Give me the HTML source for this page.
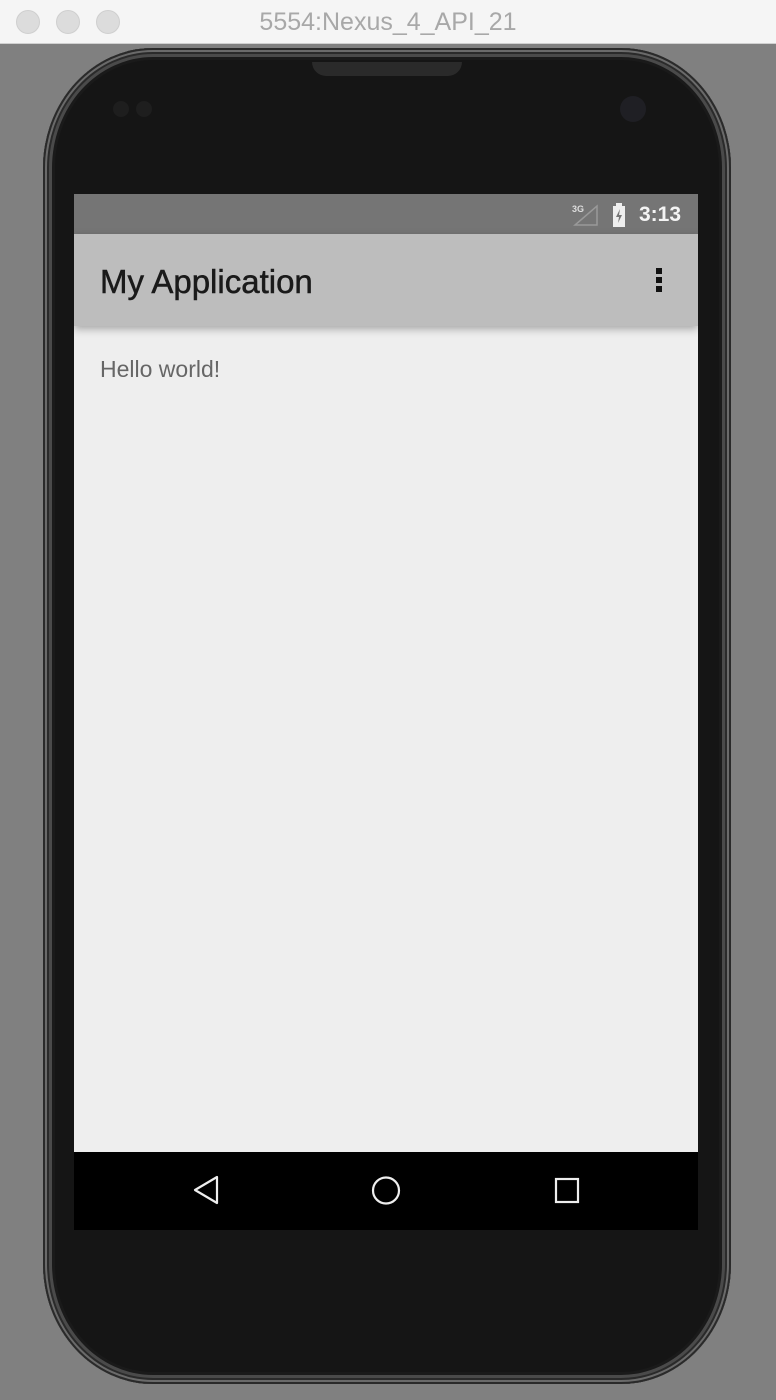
<!DOCTYPE html>
<html><head><meta charset="utf-8"><style>
body{margin:0;width:776px;height:1400px;background:#808080;overflow:hidden;position:relative;font-family:"Liberation Sans",sans-serif}
.tb{position:absolute;left:0;top:0;width:776px;height:43px;background:#f5f5f5;border-bottom:1px solid #d0d0d0}
.dot{position:absolute;top:10px;width:24px;height:24px;border-radius:50%;background:#dcdcdc;border:1px solid #cfcfcf;box-sizing:border-box}
.title{position:absolute;top:0;width:776px;text-align:center;line-height:44px;font-size:25px;color:#a8a8a8}
.phone{position:absolute;left:43px;top:48px;width:688px;height:1336px;border-radius:110px/120px;background:#151515;box-shadow:inset 0 0 0 2px #2a2a2a,inset 0 0 0 4px #6a6a6a,inset 0 0 0 6px #2a2a2a,inset 0 0 0 9px #4a4a4a,inset 0 0 0 12px #1a1a1a}
.notch{position:absolute;left:312px;top:62px;width:150px;height:14px;background:#2a2a2a;border-radius:0 0 20px 20px}
.screen{position:absolute;left:74px;top:194px;width:624px;height:1036px;background:#eeeeee;overflow:hidden}
.sb{position:absolute;left:0;top:0;width:624px;height:40px;background:#757575}
.ab{position:absolute;left:0;top:40px;width:624px;height:92px;background:#bdbdbd;box-shadow:0 3px 8px rgba(0,0,0,.3)}
.nav{position:absolute;left:0;top:958px;width:624px;height:78px;background:#000}
</style></head><body>
<div class="tb"><div class="dot" style="left:16px"></div><div class="dot" style="left:56px"></div><div class="dot" style="left:96px"></div><div class="title">5554:Nexus_4_API_21</div></div>
<div class="phone"></div>
<div class="notch"></div>
<div style="position:absolute;left:113px;top:101px;width:16px;height:16px;border-radius:50%;background:#1e1e1e"></div>
<div style="position:absolute;left:136px;top:101px;width:16px;height:16px;border-radius:50%;background:#1e1e1e"></div>
<div style="position:absolute;left:620px;top:96px;width:26px;height:26px;border-radius:50%;background:#1f1f24"></div>
<div class="screen">
<div class="sb">
<svg style="position:absolute;left:496px;top:10px" width="30" height="22"><text x="2" y="8" font-size="9" fill="#ddd" font-family="Liberation Sans" font-weight="bold">3G</text><path d="M5 21 L27 21 L27 2 Z" fill="none" stroke="#999" stroke-width="1.5"/></svg>
<svg style="position:absolute;left:538px;top:9px" width="14" height="24"><rect x="4" y="0" width="6" height="3" fill="#eee"/><rect x="1" y="3" width="12" height="21" fill="#eee"/><path d="M8 6 L4 14 L7 14 L6 20 L10 12 L7 12 Z" fill="#757575"/></svg>
<div style="position:absolute;left:565px;top:1px;line-height:40px;font-size:21px;font-weight:bold;color:#f4f4f4">3:13</div>
</div>
<div class="ab">
<div style="position:absolute;left:26px;top:2px;line-height:92px;font-size:33px;color:#1a1a1a;-webkit-text-stroke:0.5px #1a1a1a">My Application</div>
<div style="position:absolute;left:582px;top:34px;width:6px;"><div style="width:6px;height:6px;background:#111;margin-bottom:3px"></div><div style="width:6px;height:6px;background:#111;margin-bottom:3px"></div><div style="width:6px;height:6px;background:#111"></div></div>
</div>
<div style="position:absolute;left:26px;top:162px;font-size:23px;color:#666">Hello world!</div>
<div class="nav">
<svg width="624" height="78"><path d="M143 25 L121 38 L143 51 Z" fill="none" stroke="#eee" stroke-width="2.2" stroke-linejoin="round"/><ellipse cx="312" cy="38.5" rx="13" ry="13" fill="none" stroke="#eee" stroke-width="2.2"/><rect x="482" y="27" width="22" height="23" fill="none" stroke="#eee" stroke-width="2.2"/></svg>
</div>
</div>
</body></html>
